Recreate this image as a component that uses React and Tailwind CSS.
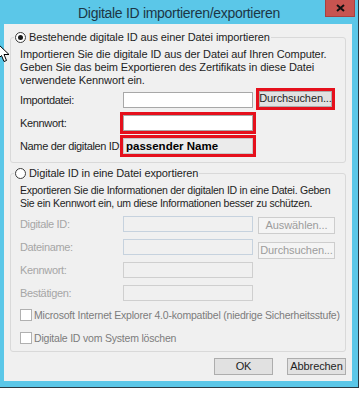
import { useState } from 'react';

// Windows 8 style dialog: import / export a digital ID

function Radio({ checked }) {
  return (
    <span className="flex h-[11px] w-[11px] shrink-0 items-center justify-center rounded-full border border-[#3c3c3c] bg-white">
      {checked && <span className="h-[5px] w-[5px] rounded-full bg-[#1a1a1a]" />}
    </span>
  );
}

function Checkbox({ label }) {
  return (
    <div className="flex h-[16px] items-center gap-[2px]">
      <span className="h-[12px] w-[12px] shrink-0 border border-[#b0b0b0] bg-white" />
      <span className="text-[10.5px] tracking-[-0.2px] text-[#7c7c7c]">{label}</span>
    </div>
  );
}

// every field sits in a 3px frame; the frame is red where the screenshot marks it
function Field({ marked, disabled, blue, children }) {
  const frame = marked ? 'border-[#e5101c]' : 'border-transparent';
  let box = 'bg-white border-[#a8a8a8]';
  if (disabled) box = blue ? 'bg-[#f0f0f0] border-[#c6d2de]' : 'bg-[#f0f0f0] border-[#cfcfcf]';
  if (children) box = 'bg-[#ebebeb] border-[#c8c8c8]';
  return (
    <div className={`h-[22px] w-[136px] shrink-0 border-[3px] ${frame}`}>
      <div className={`flex h-full w-full items-center border px-[2px] ${box}`}>{children}</div>
    </div>
  );
}

function Button({ children, disabled, className = '' }) {
  const look = disabled
    ? 'border-[#cdcdcd] bg-[#f4f4f4] text-[#9c9c9c]'
    : 'border-[#adadad] bg-[#e1e1e1] text-[#1e1e1e]';
  return (
    <div className={`flex h-[17px] items-center justify-center border ${look} ${className}`}>
      {children}
    </div>
  );
}

function Row({ label, disabled, children }) {
  return (
    <div className="flex h-[22px] items-center">
      <span className={`w-[100px] shrink-0 tracking-[-0.35px] ${disabled ? 'text-[#a6a6a6]' : 'text-[#1e1e1e]'}`}>{label}</span>
      {children}
    </div>
  );
}

function Cursor() {
  return (
    <svg className="absolute left-[-3px] top-[43px]" width="13" height="20" viewBox="0 0 13 20">
      <path d="M1 1 L1 16 L4.5 12.5 L7 18.5 L9.5 17.5 L7 11.5 L12 11.5 Z" fill="#fff" stroke="#000" strokeWidth="1" />
    </svg>
  );
}

export default function App() {
  const [mode] = useState('import');

  return (
    <div className="relative h-[396px] w-[361px] overflow-hidden whitespace-nowrap bg-white font-['Liberation_Sans',Arial,sans-serif] text-[11px] leading-[13px] tracking-[-0.1px]">
      <div className="h-[388px] w-[359px] border-r border-b border-[#2a3a44] bg-[#5bc7e8]">
        <div className="relative flex h-[24px] items-center justify-center">
          <span className="mt-[2px] text-[14px] tracking-[-0.3px] text-[#1b3646]">Digitale ID importieren/exportieren</span>
          <div className="absolute right-[3px] top-0 flex h-[17px] w-[30px] items-center justify-center border border-t-0 border-[#a84040] bg-[#c75450]">
            <svg width="9" height="8" viewBox="0 0 9 8">
              <path d="M1 1 L8 7 M8 1 L1 7" stroke="#111" strokeWidth="2" />
            </svg>
          </div>
        </div>

        <div className="ml-[4px] flex h-[357px] w-[348px] flex-col bg-[#f0f0f0] px-[6px] text-[#1e1e1e]">
          <fieldset className="mt-[7px] min-w-0 rounded-[3px] border border-[#d9d9d9] pr-[6px] pb-[5px] pl-[9px]">
            <legend className="ml-[-6px] flex items-center gap-[3px] px-[1px]">
              <Radio checked={mode === 'import'} />
              <span>Bestehende digitale ID aus einer Datei importieren</span>
            </legend>
            <p className="pt-[4px]">
              Importieren Sie die digitale ID aus der Datei auf Ihren Computer.
              <br />
              Geben Sie das beim Exportieren des Zertifikats in diese Datei
              <br />
              verwendete Kennwort ein.
            </p>
            <div className="mt-[2px] flex flex-col gap-[1px]">
              <Row label="Importdatei:">
                <Field />
                <div className="mt-[-3px] h-[22px] w-[79px] border-[3px] border-[#e5101c]">
                  <Button className="h-full">Durchsuchen...</Button>
                </div>
              </Row>
              <Row label="Kennwort:">
                <Field marked />
              </Row>
              <Row label="Name der digitalen ID:">
                <Field marked>
                  <span className="text-[11.5px] font-bold tracking-normal text-black">passender Name</span>
                </Field>
              </Row>
            </div>
          </fieldset>

          <fieldset className="mt-[4px] min-w-0 rounded-[3px] border border-[#d9d9d9] pr-[6px] pb-[5px] pl-[9px]">
            <legend className="ml-[-6px] flex items-center gap-[3px] px-[1px]">
              <Radio checked={mode === 'export'} />
              <span>Digitale ID in eine Datei exportieren</span>
            </legend>
            <p className="pt-[4px] text-[10.5px] tracking-[-0.25px]">
              Exportieren Sie die Informationen der digitalen ID in eine Datei. Geben
              <br />
              Sie ein Kennwort ein, um diese Informationen besser zu schützen.
            </p>
            <div className="mt-[3px] flex flex-col gap-[1px]">
              <Row label="Digitale ID:" disabled>
                <Field disabled blue />
                <Button disabled className="ml-[2px] mt-[2px] w-[77px]">Auswählen...</Button>
              </Row>
              <Row label="Dateiname:" disabled>
                <Field disabled blue />
                <Button disabled className="ml-[2px] mt-[6px] w-[77px]">Durchsuchen...</Button>
              </Row>
              <Row label="Kennwort:" disabled>
                <Field disabled />
              </Row>
              <Row label="Bestätigen:" disabled>
                <Field disabled />
              </Row>
            </div>
            <div className="mt-[3px] flex flex-col gap-[7px]">
              <Checkbox label="Microsoft Internet Explorer 4.0-kompatibel (niedrige Sicherheitsstufe)" />
              <Checkbox label="Digitale ID vom System löschen" />
            </div>
          </fieldset>

          <div className="mt-[6px] flex justify-end gap-[14px]">
            <Button className="w-[59px]">OK</Button>
            <Button className="w-[59px] border-[#707070]">Abbrechen</Button>
          </div>
        </div>
      </div>
      <Cursor />
    </div>
  );
}
